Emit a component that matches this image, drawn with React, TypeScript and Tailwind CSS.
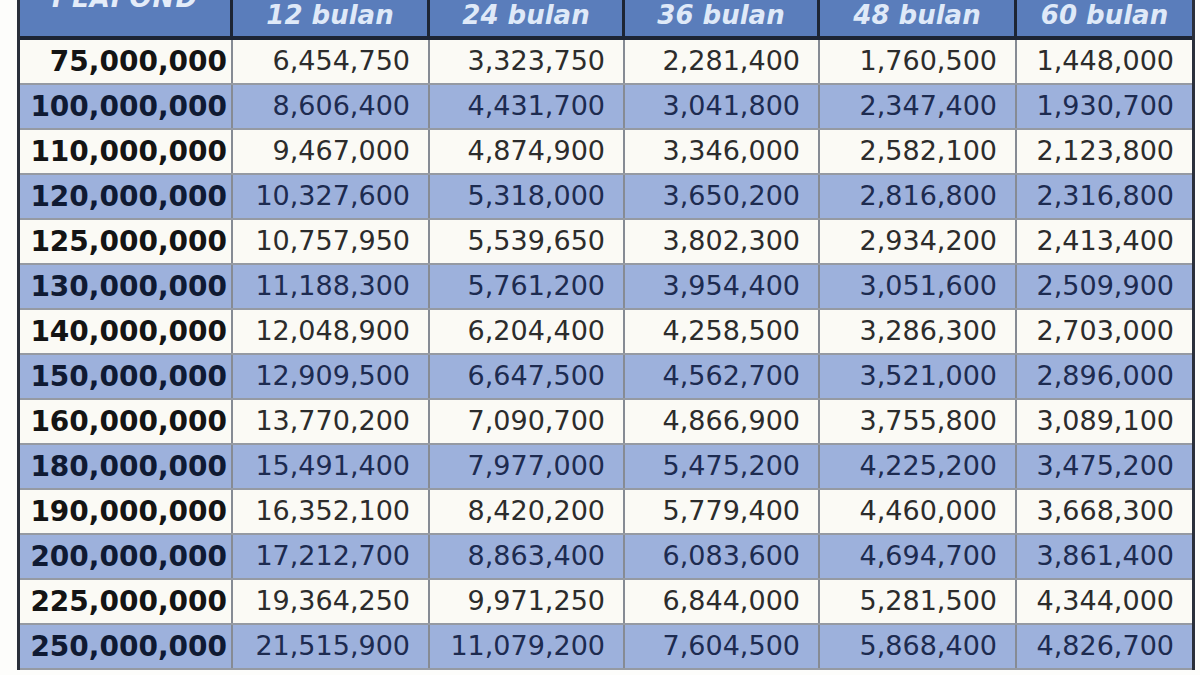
import React from "react";

const rows: string[][] = [
  ["75,000,000", "6,454,750", "3,323,750", "2,281,400", "1,760,500", "1,448,000"],
  ["100,000,000", "8,606,400", "4,431,700", "3,041,800", "2,347,400", "1,930,700"],
  ["110,000,000", "9,467,000", "4,874,900", "3,346,000", "2,582,100", "2,123,800"],
  ["120,000,000", "10,327,600", "5,318,000", "3,650,200", "2,816,800", "2,316,800"],
  ["125,000,000", "10,757,950", "5,539,650", "3,802,300", "2,934,200", "2,413,400"],
  ["130,000,000", "11,188,300", "5,761,200", "3,954,400", "3,051,600", "2,509,900"],
  ["140,000,000", "12,048,900", "6,204,400", "4,258,500", "3,286,300", "2,703,000"],
  ["150,000,000", "12,909,500", "6,647,500", "4,562,700", "3,521,000", "2,896,000"],
  ["160,000,000", "13,770,200", "7,090,700", "4,866,900", "3,755,800", "3,089,100"],
  ["180,000,000", "15,491,400", "7,977,000", "5,475,200", "4,225,200", "3,475,200"],
  ["190,000,000", "16,352,100", "8,420,200", "5,779,400", "4,460,000", "3,668,300"],
  ["200,000,000", "17,212,700", "8,863,400", "6,083,600", "4,694,700", "3,861,400"],
  ["225,000,000", "19,364,250", "9,971,250", "6,844,000", "5,281,500", "4,344,000"],
  ["250,000,000", "21,515,900", "11,079,200", "7,604,500", "5,868,400", "4,826,700"],
];

const months = ["12 bulan", "24 bulan", "36 bulan", "48 bulan", "60 bulan"];

const cols = "grid grid-cols-[213px_197px_195px_195px_197px_175px]";

export default function App() {
  return (
    <div
      className="w-[1200px] h-[675px] overflow-hidden bg-[#fdfdfb]"
      style={{ fontFamily: '"DejaVu Sans", Verdana, sans-serif' }}
    >
      <div className="ml-[17px] mt-[-40px] w-[1178px] border-l-[3px] border-r-[3px] border-[#2a2f3a]">
        {/* header */}
        <div className={`${cols} grid-rows-[40px_36px] bg-[#5a7dbb] border-b-[4px] border-[#1d2534]`}>
          <div className="row-span-2 border-r-[3px] border-[#1d2534] flex items-center justify-center text-[26px] font-bold italic text-[#e3ecf9] tracking-[1px]">
            PLAFOND
          </div>
          <div className="col-span-5" />
          {months.map((m, i) => (
            <div
              key={m}
              className={`flex items-center justify-center pb-[6px] text-[26px] font-bold italic text-[#dfe9f8] ${
                i < 4 ? "border-r-[3px] border-[#1d2534]" : ""
              }`}
            >
              {m}
            </div>
          ))}
        </div>
        {/* body */}
        {rows.map((r, ri) => {
          const blue = ri % 2 === 1;
          return (
            <div
              key={r[0]}
              className={`${cols} h-[45px] border-b-2 border-[#959aa3] ${
                blue ? "bg-[#9db1dc]" : "bg-[#fbfaf5]"
              }`}
            >
              {r.map((v, ci) => (
                <div
                  key={ci}
                  className={`flex items-center justify-end ${
                    ci < 5 ? "border-r-2 border-[#868b94]" : ""
                  } ${
                    ci === 0
                      ? `pr-[4px] text-[28px] font-bold ${blue ? "text-[#0f1a33]" : "text-[#141414]"}`
                      : `pr-[18px] text-[27px] ${blue ? "text-[#1d2b50]" : "text-[#2c2c2c]"}`
                  }`}
                >
                  {v}
                </div>
              ))}
            </div>
          );
        })}
      </div>
    </div>
  );
}
